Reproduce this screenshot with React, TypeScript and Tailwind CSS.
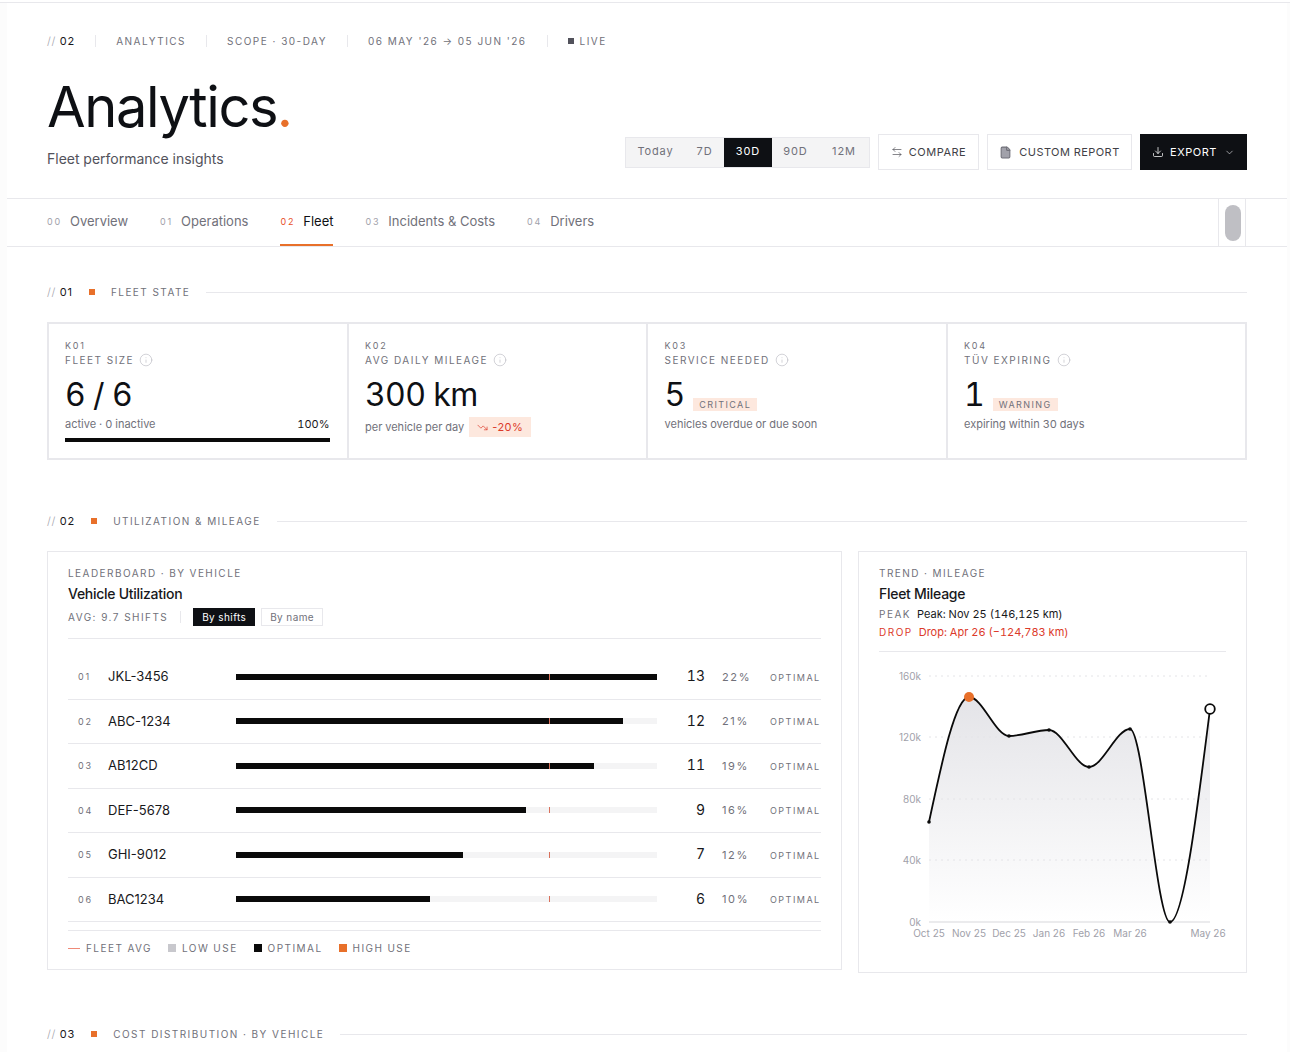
import React from "react";
import { ArrowLeftRight, ChevronDown, Download, File, Info, TrendingDown } from "lucide-react";

const pts: [number, number][] = [
  [929, 822],
  [969, 697],
  [1009, 736],
  [1049, 730],
  [1089, 767],
  [1130, 729],
  [1170, 922],
  [1210, 709],
];

function monotonePath(p: [number, number][]) {
  const n = p.length;
  const t: number[] = new Array(n).fill(0);
  for (let i = 1; i < n - 1; i++) {
    const h0 = p[i][0] - p[i - 1][0];
    const h1 = p[i + 1][0] - p[i][0];
    const s0 = (p[i][1] - p[i - 1][1]) / h0;
    const s1 = (p[i + 1][1] - p[i][1]) / h1;
    const q = (s0 * h1 + s1 * h0) / (h0 + h1);
    t[i] = (Math.sign(s0) + Math.sign(s1)) * Math.min(Math.abs(s0), Math.abs(s1), 0.5 * Math.abs(q));
  }
  t[0] = (3 * (p[1][1] - p[0][1])) / (p[1][0] - p[0][0]) / 2 - t[1] / 2;
  t[n - 1] = (3 * (p[n - 1][1] - p[n - 2][1])) / (p[n - 1][0] - p[n - 2][0]) / 2 - t[n - 2] / 2;
  let d = `M${p[0][0]},${p[0][1]}`;
  for (let i = 1; i < n; i++) {
    const dx = (p[i][0] - p[i - 1][0]) / 3;
    d += `C${p[i - 1][0] + dx},${p[i - 1][1] + dx * t[i - 1]} ${p[i][0] - dx},${p[i][1] - dx * t[i]} ${p[i][0]},${p[i][1]}`;
  }
  return d;
}

function SectionHead({ num, title }: { num: string; title: string }) {
  return (
    <div className="flex items-center h-[14px] normal-nums">
      <span className="text-[11px] tracking-[0.05em] text-[#a1a1aa] font-light mr-[4px]">//</span>
      <span className="text-[11px] tracking-[0.08em] text-[#18181b]">{num}</span>
      <span className="w-[6px] h-[6px] bg-[#e8702a] ml-[16px] mr-[16px]" />
      <span className="text-[10px] tracking-[0.145em] text-[#71717a] uppercase whitespace-nowrap">{title}</span>
      <span className="flex-1 h-px bg-[#e8e8ec] ml-[16px]" />
    </div>
  );
}

function KpiHead({ code, label }: { code: string; label: string }) {
  return (
    <>
      <div className="text-[9px] leading-[12px] tracking-[0.2em] text-[#71717a] normal-nums">{code}</div>
      <div className="flex items-center gap-[5px] h-[16px]">
        <span className="text-[10px] tracking-[0.15em] text-[#71717a] whitespace-nowrap">{label}</span>
        <Info size={14} strokeWidth={1} className="text-[#b4b4bb]" />
      </div>
    </>
  );
}

const rows = [
  { r: "01", n: "JKL-3456", c: 13, p: "22%", w: "w-full" },
  { r: "02", n: "ABC-1234", c: 12, p: "21%", w: "w-[92%]" },
  { r: "03", n: "AB12CD", c: 11, p: "19%", w: "w-[85%]" },
  { r: "04", n: "DEF-5678", c: 9, p: "16%", w: "w-[69%]" },
  { r: "05", n: "GHI-9012", c: 7, p: "12%", w: "w-[54%]" },
  { r: "06", n: "BAC1234", c: 6, p: "10%", w: "w-[46%]" },
];

function Tab({ n, label, active }: { n: string; label: string; active?: boolean }) {
  return (
    <div className={`h-full flex items-center gap-[8px] border-b-2 normal-nums ${active ? "border-[#e8702a]" : "border-transparent"}`}>
      <span className={`text-[9px] tracking-[0.2em] ${active ? "text-[#e8502a]" : "text-[#a1a1aa]"}`}>{n}</span>
      <span className={`text-[13px] ${active ? "text-[#0e1014]" : "text-[#71717a]"}`}>{label}</span>
    </div>
  );
}

export default function App() {
  const line = monotonePath(pts);
  const area = `${line}L1210,922L929,922Z`;
  return (
    <div className="h-[1052px] w-[1290px] overflow-hidden bg-[#fcfcfc] text-[#0e1014] tabular-nums [font-family:Inter,sans-serif]">
      <div className="h-[2px] bg-white" />
      <div className="h-px bg-[#e8e8ec]" />
      <div className="ml-[7px] w-[1280px] bg-white h-[1049px]">
        {/* header */}
        <div className="px-[40px] h-[195px] relative">
          <div className="pt-[31px] flex items-center h-[45px] text-[10px] tracking-[0.148em] text-[#71717a] whitespace-nowrap normal-nums">
            <span className="text-[#a1a1aa] font-light mr-[4px] text-[11px] tracking-[0.05em]">//</span>
            <span className="text-[#18181b] text-[11px] tracking-[0.08em]">02</span>
            <span className="w-px h-[12px] bg-[#e8e8ec] mx-[20px]" />
            <span>ANALYTICS</span>
            <span className="w-px h-[12px] bg-[#e8e8ec] mx-[20px]" />
            <span>SCOPE · 30-DAY</span>
            <span className="w-px h-[12px] bg-[#e8e8ec] mx-[20px]" />
            <span>06 MAY '26 → 05 JUN '26</span>
            <span className="w-px h-[12px] bg-[#e8e8ec] mx-[20px]" />
            <span className="w-[6px] h-[6px] bg-[#52525b] mr-[6px]" />
            <span>LIVE</span>
          </div>
          <div className="mt-[25px] text-[56px] leading-[68px] tracking-[-0.025em] font-normal whitespace-nowrap">
            Analytics<span className="text-[#e8702a]">.</span>
          </div>
          <div className="mt-[8px] text-[14px] leading-[20px] text-[#52525b]">Fleet performance insights</div>
          <div className="absolute right-[40px] top-[131px] flex items-center gap-[8px] whitespace-nowrap">
            <div className="flex items-stretch h-[31px] bg-[#f4f4f5] border border-[#e8e8ec] text-[11px] tracking-[0.08em] text-[#71717a] normal-nums">
              <span className="w-[59px] flex items-center justify-center pb-px">Today</span>
              <span className="w-[39px] flex items-center justify-center pb-px">7D</span>
              <span className="w-[48px] flex items-center justify-center pb-px bg-[#0e1014] text-white">30D</span>
              <span className="w-[47px] flex items-center justify-center pb-px">90D</span>
              <span className="w-[50px] flex items-center justify-center pb-px">12M</span>
            </div>
            <div className="h-[36px] w-[101px] border border-[#e8e8ec] bg-white flex items-center justify-center gap-[6px] text-[11px] tracking-[0.045em] text-[#3f3f46]">
              <ArrowLeftRight size={12} strokeWidth={1.25} />
              COMPARE
            </div>
            <div className="h-[36px] w-[145px] border border-[#e8e8ec] bg-white flex items-center justify-center gap-[7px] text-[11px] tracking-[0.04em] text-[#3f3f46]">
              <File size={13} strokeWidth={2} className="fill-[#a1a1aa] text-[#71717a]" />
              CUSTOM REPORT
            </div>
            <div className="h-[36px] w-[107px] bg-[#0e1014] flex items-center justify-center gap-[6px] text-[11px] tracking-[0.05em] text-white">
              <Download size={12} strokeWidth={1.5} />
              EXPORT
              <ChevronDown size={11} strokeWidth={1.5} className="ml-[1px] text-[#d4d4d8]" />
            </div>
          </div>
        </div>
        {/* tabs */}
        <div className="h-[49px] border-y border-[#e8e8ec] pl-[40px] flex items-stretch relative">
          <div className="flex gap-[32px] items-stretch">
            <Tab n="00" label="Overview" />
            <Tab n="01" label="Operations" />
            <Tab n="02" label="Fleet" active />
            <Tab n="03" label="Incidents & Costs" />
            <Tab n="04" label="Drivers" />
          </div>
          <div className="absolute left-[1211px] top-0 bottom-0 w-[28px] border-x border-[#e8e8ec] flex items-center pl-[6px]">
            <div className="w-[16px] h-[36px] rounded-full bg-[#bfbfc4]" />
          </div>
        </div>
        {/* main */}
        <div className="px-[40px]">
          <div className="pt-[38px]">
            <SectionHead num="01" title="FLEET STATE" />
          </div>
          <div className="mt-[23px] grid grid-cols-4 gap-[2px] p-[2px] bg-[#e8e8ec] h-[138px]">
            <div className="bg-white pl-[16px] pr-[17px] pt-[16px]">
              <KpiHead code="K01" label="FLEET SIZE" />
              <div className="text-[32px] leading-[40px] mt-[7px] tracking-[-0.02em]">6 / 6</div>
              <div className="flex justify-between items-center mt-[1px] h-[16px] text-[11px]">
                <span className="text-[#71717a]">active · 0 inactive</span>
                <span className="text-[#18181b]">100%</span>
              </div>
              <div className="h-[4px] bg-[#0a0a0a] mt-[6px]" />
            </div>
            <div className="bg-white pl-[16.5px] pr-[16px] pt-[16px]">
              <KpiHead code="K02" label="AVG DAILY MILEAGE" />
              <div className="text-[32px] leading-[40px] mt-[7px] tracking-[-0.02em]">300 km</div>
              <div className="flex items-center gap-[5px] mt-[2px] h-[20px] text-[11px] text-[#71717a]">
                <span>per vehicle per day</span>
                <span className="h-[20px] px-[8px] bg-[#fde8de] text-[#dc3a2a] flex items-center gap-[4px] tracking-[0.04em] normal-nums">
                  <TrendingDown size={11} strokeWidth={1.5} />
                  -20%
                </span>
              </div>
            </div>
            <div className="bg-white pl-[16.5px] pr-[16px] pt-[16px]">
              <KpiHead code="K03" label="SERVICE NEEDED" />
              <div className="flex items-end mt-[7px] h-[40px]">
                <span className="text-[32px] leading-[40px]">5</span>
                <span className="ml-[8px] mb-[4px] h-[13px] px-[6px] bg-[#fde8de] text-[9px] leading-[13px] tracking-[0.155em] text-[#71717a]">CRITICAL</span>
              </div>
              <div className="mt-[1px] h-[16px] flex items-center text-[11px] text-[#71717a]">vehicles overdue or due soon</div>
            </div>
            <div className="bg-white pl-[16.5px] pr-[16px] pt-[16px]">
              <KpiHead code="K04" label="TÜV EXPIRING" />
              <div className="flex items-end mt-[7px] h-[40px]">
                <span className="text-[32px] leading-[40px]">1</span>
                <span className="ml-[8px] mb-[4px] h-[13px] px-[6px] bg-[#fde8de] text-[9px] leading-[13px] tracking-[0.155em] text-[#71717a]">WARNING</span>
              </div>
              <div className="mt-[1px] h-[16px] flex items-center text-[11px] text-[#71717a]">expiring within 30 days</div>
            </div>
          </div>

          <div className="pt-[54px]">
            <SectionHead num="02" title="UTILIZATION & MILEAGE" />
          </div>
          <div className="mt-[23px] flex items-start gap-[16px]">
            {/* left card */}
            <div className="w-[795px] h-[419px] border border-[#e8e8ec] px-[20px] pt-[14px]">
              <div className="text-[10px] leading-[14px] tracking-[0.145em] text-[#71717a]">LEADERBOARD · BY VEHICLE</div>
              <div className="mt-[4px] text-[14px] leading-[20px] font-medium tracking-[-0.02em] text-[#18181b]">Vehicle Utilization</div>
              <div className="mt-[4px] h-[18px] flex items-center text-[10px] tracking-[0.145em] text-[#71717a] normal-nums">
                <span>AVG: 9.7 SHIFTS</span>
                <span className="w-px h-[12px] bg-[#e8e8ec] ml-[12px] mr-[12px]" />
                <span className="h-[18px] px-[9px] bg-[#0e1014] text-white tracking-[0.04em] flex items-center">By shifts</span>
                <span className="h-[18px] px-[8px] ml-[6px] border border-[#e8e8ec] text-[#71717a] tracking-[0.04em] flex items-center">By name</span>
              </div>
              <div className="mt-[12px] border-t border-[#e8e8ec] pt-[16px]">
                {rows.map((row) => (
                  <div key={row.r} className="h-[44.5px] border-b border-[#e8e8ec] flex items-center">
                    <span className="w-[40px] shrink-0 pl-[10px] text-[9px] tracking-[0.2em] text-[#71717a] normal-nums">{row.r}</span>
                    <span className="w-[128px] shrink-0 text-[13px] text-[#18181b] normal-nums">{row.n}</span>
                    <div className="w-[421px] shrink-0 h-[6px] bg-[#f4f4f5] relative">
                      <div className={`h-full bg-[#0a0a0a] ${row.w}`} />
                      <div className="absolute left-[313px] top-0 bottom-0 w-px bg-[#d9705a]" />
                    </div>
                    <span className="w-[48px] shrink-0 text-right text-[14px] pb-[2px] text-[#18181b]">{row.c}</span>
                    <span className="w-[48px] shrink-0 ml-[17px] text-[11px] tracking-[0.15em] text-[#71717a] normal-nums">{row.p}</span>
                    <span className="shrink-0 pt-px text-[9px] tracking-[0.165em] text-[#71717a]">OPTIMAL</span>
                  </div>
                ))}
              </div>
              <div className="mt-[8px] border-t border-[#e8e8ec] flex items-center h-[35px] text-[10px] tracking-[0.145em] text-[#71717a]">
                <span className="w-[12px] h-px bg-[#ef8a78] mr-[6px]" />
                <span>FLEET AVG</span>
                <span className="w-[8px] h-[8px] bg-[#c8c8cd] ml-[16px] mr-[6px]" />
                <span>LOW USE</span>
                <span className="w-[8px] h-[8px] bg-[#0a0a0a] ml-[16px] mr-[6px]" />
                <span>OPTIMAL</span>
                <span className="w-[8px] h-[8px] bg-[#e8702a] ml-[16px] mr-[6px]" />
                <span>HIGH USE</span>
              </div>
            </div>
            {/* right card */}
            <div className="w-[389px] h-[422px] border border-[#e8e8ec] px-[20px] pt-[14px]">
              <div className="text-[10px] leading-[14px] tracking-[0.145em] text-[#71717a]">TREND · MILEAGE</div>
              <div className="mt-[4px] text-[14px] leading-[20px] font-medium tracking-[-0.02em] text-[#18181b]">Fleet Mileage</div>
              <div className="mt-[1px] h-[18px] flex items-center text-[11px] text-[#18181b]">
                <span className="text-[10px] tracking-[0.15em] text-[#71717a] mr-[6px]">PEAK</span>
                Peak: Nov 25 (146,125 km)
              </div>
              <div className="h-[18px] flex items-center text-[11px] text-[#dc3a2a]">
                <span className="text-[10px] tracking-[0.15em] mr-[6px]">DROP</span>
                Drop: Apr 26 (−124,783 km)
              </div>
              <div className="mt-[10px] border-t border-[#e8e8ec]" />
              <svg width="347" height="294" viewBox="879 652 347 294" className="block normal-nums">
                <defs>
                  <linearGradient id="g" x1="0" y1="0" x2="0" y2="1">
                    <stop offset="0" stopColor="#e4e4e8" />
                    <stop offset="1" stopColor="#e4e4e8" stopOpacity="0" />
                  </linearGradient>
                </defs>
                {[676, 737, 799, 860].map((y) => (
                  <line key={y} x1="929" x2="1210" y1={y} y2={y} stroke="#e4e4e7" strokeWidth="1" strokeDasharray="2 4" />
                ))}
                <line x1="929" x2="1210" y1="922" y2="922" stroke="#e4e4e7" strokeWidth="1.5" />
                <path d={area} fill="url(#g)" />
                <path d={line} fill="none" stroke="#0a0a0a" strokeWidth="1.8" />
                {pts.map(([x, y]) => (
                  <circle key={x} cx={x} cy={y} r="1.8" fill="#0a0a0a" />
                ))}
                <circle cx="969" cy="697" r="5" fill="#e8702a" />
                <circle cx="1210" cy="709" r="4.8" fill="#fff" stroke="#0a0a0a" strokeWidth="1.8" />
                <g fill="#a1a1aa" fontSize="10">
                  {[["160k", 676], ["120k", 737], ["80k", 799], ["40k", 860], ["0k", 922]].map(([t, y]) => (
                    <text key={t} x="921" y={Number(y) + 3.5} textAnchor="end">{t}</text>
                  ))}
                  {[["Oct 25", 929], ["Nov 25", 969], ["Dec 25", 1009], ["Jan 26", 1049], ["Feb 26", 1089], ["Mar 26", 1130], ["May 26", 1208]].map(([t, x]) => (
                    <text key={t} x={x} y="937" textAnchor="middle">{t}</text>
                  ))}
                </g>
              </svg>
            </div>
          </div>
          <div className="pt-[54px]">
            <SectionHead num="03" title="COST DISTRIBUTION · BY VEHICLE" />
          </div>
        </div>
      </div>
    </div>
  );
}
